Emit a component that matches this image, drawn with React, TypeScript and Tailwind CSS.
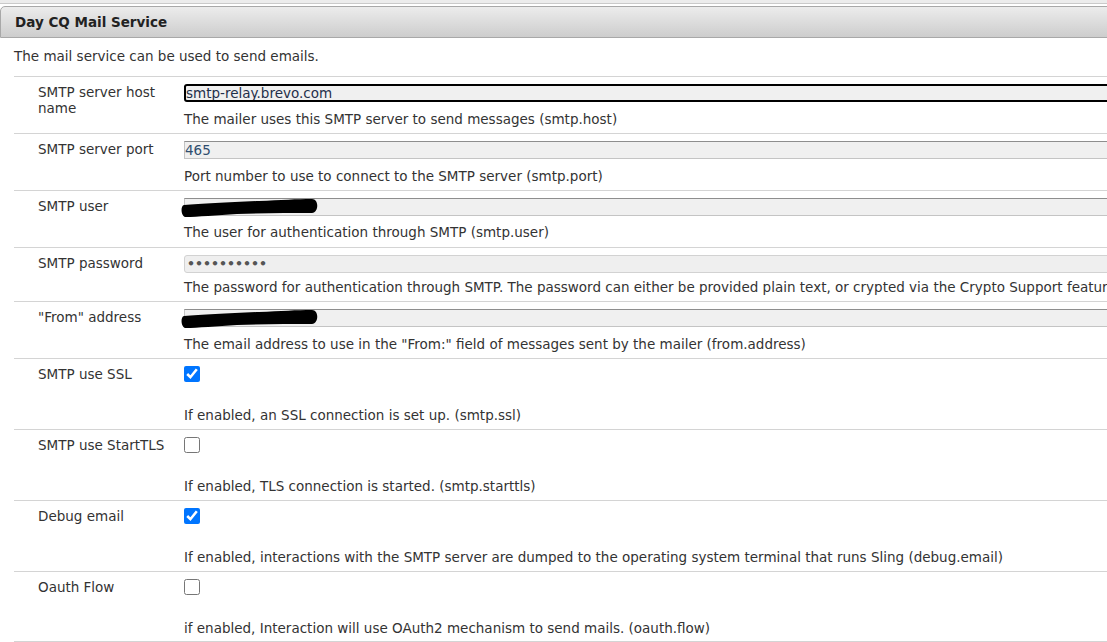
import React from "react";

type Row = {
  label: string;
  kind: "text" | "focus" | "password" | "check";
  value?: string;
  checked?: boolean;
  redacted?: boolean;
  help: string;
  h: string;
  helpGap: string;
};

const rows: Row[] = [
  { label: "SMTP server host name", kind: "focus", value: "smtp-relay.brevo.com", help: "The mailer uses this SMTP server to send messages (smtp.host)", h: "h-[57px]", helpGap: "mt-[9px]" },
  { label: "SMTP server port", kind: "text", value: "465", help: "Port number to use to connect to the SMTP server (smtp.port)", h: "h-[57px]", helpGap: "mt-[9px]" },
  { label: "SMTP user", kind: "text", value: "", redacted: true, help: "The user for authentication through SMTP (smtp.user)", h: "h-[57px]", helpGap: "mt-[8px]" },
  { label: "SMTP password", kind: "password", value: "xxxxxxxxxx", help: "The password for authentication through SMTP. The password can either be provided plain text, or crypted via the Crypto Support feature (smtp.password)", h: "h-[54px]", helpGap: "mt-[6px]" },
  { label: "\"From\" address", kind: "text", value: "", redacted: true, help: "The email address to use in the \"From:\" field of messages sent by the mailer (from.address)", h: "h-[57px]", helpGap: "mt-[9px]" },
  { label: "SMTP use SSL", kind: "check", checked: true, help: "If enabled, an SSL connection is set up. (smtp.ssl)", h: "h-[71px]", helpGap: "mt-[25px]" },
  { label: "SMTP use StartTLS", kind: "check", checked: false, help: "If enabled, TLS connection is started. (smtp.starttls)", h: "h-[71px]", helpGap: "mt-[25px]" },
  { label: "Debug email", kind: "check", checked: true, help: "If enabled, interactions with the SMTP server are dumped to the operating system terminal that runs Sling (debug.email)", h: "h-[71px]", helpGap: "mt-[25px]" },
  { label: "Oauth Flow", kind: "check", checked: false, help: "if enabled, Interaction will use OAuth2 mechanism to send mails. (oauth.flow)", h: "h-[70px]", helpGap: "mt-[25px]" },
];

// black marker stroke that hides the redacted values
const Scribble: React.FC = () => (
  <svg className="absolute left-[-3px] top-[0px]" width="138" height="20" viewBox="0 0 138 20">
    <path
      d="M3,7 C20,6 48,4 78,3 C100,2 116,1 131,1 C138,1 138,14 131,15 C108,15 80,15 56,16 C36,17 16,19 5,19 C0,19 -1,8 3,7 Z"
      fill="#000"
    />
  </svg>
);

const Field: React.FC<{ row: Row }> = ({ row }) => {
  if (row.kind === "check") {
    return (
      <div className="flex h-4 items-center">
        <input
          type="checkbox"
          readOnly
          checked={row.checked}
          className="m-0 h-4 w-4 accent-[#0075ff]"
        />
      </div>
    );
  }
  if (row.kind === "focus") {
    return (
      <input
        readOnly
        value={row.value}
        className="block h-[18px] w-[1000px] rounded-[3px] border-2 border-black bg-[#f0f0f0] px-0 text-[13.5px] leading-[14px] text-[#1f2f4a] outline-none"
      />
    );
  }
  if (row.kind === "password") {
    return (
      <input
        type="password"
        readOnly
        value={row.value}
        className="block h-[18px] w-[1000px] rounded-[3px] border border-[#d2d2d2] bg-[#efefef] px-[2px] text-[12.5px] font-bold text-[#555] outline-none"
      />
    );
  }
  return (
    <div className="relative">
      <input
        readOnly
        value={row.value}
        className="block h-[18px] w-[1000px] border border-[#c4c4c4] border-t-[#8e8e8e] bg-[#f0f0f0] px-0 text-[13.5px] leading-[14px] text-[#2f4d6e] outline-none"
      />
      {row.redacted && <Scribble />}
    </div>
  );
};

const App: React.FC = () => {
  return (
    <div className="h-[642px] w-full overflow-hidden bg-white font-['DejaVu_Sans',sans-serif] text-[13.5px] text-[#333]">
      <div className="w-[1400px]">
        <div className="h-[4px] border-b border-[#cacaca] bg-[#ececec]" />
        <div className="mt-[2px] flex h-[32px] items-center rounded-tl-[5px] border border-[#a8a8a8] bg-linear-to-b from-[#ececec] to-[#cdcdcd] pl-[14px] font-bold text-[#222]">
          Day CQ Mail Service
        </div>
        <div className="mt-[10px] pl-[14px] leading-4">The mail service can be used to send emails.</div>
        <div className="ml-[14px] mt-[12px] border-t border-[#d4d4d4]">
          {rows.map((row) => (
            <div key={row.label} className={`flex border-b border-[#d4d4d4] pt-[7px] ${row.h}`}>
              <div className="w-[170px] shrink-0 pl-[24px] pr-[12px] leading-4">{row.label}</div>
              <div className="flex-1">
                <Field row={row} />
                <div className={`whitespace-nowrap leading-4 ${row.helpGap}`}>{row.help}</div>
              </div>
            </div>
          ))}
        </div>
      </div>
    </div>
  );
};

export default App;
